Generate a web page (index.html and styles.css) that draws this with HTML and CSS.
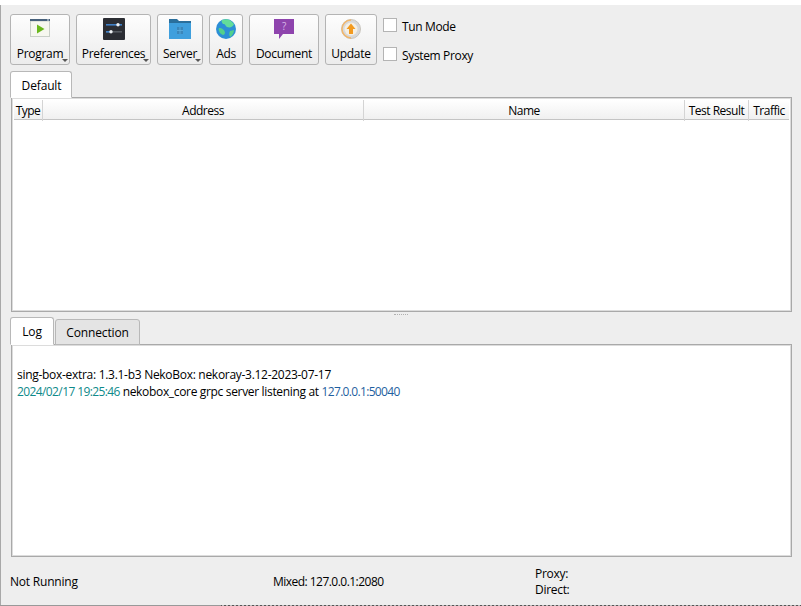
FILE: index.html
```html
<!DOCTYPE html>
<html lang="en">
<head>
<meta charset="utf-8">
<title>NekoBox</title>
<link rel="stylesheet" href="styles.css">
</head>
<body>
<div class="window">
  <div class="toolbar">
    <button class="tool w-program has-menu">
      <svg class="icon" viewBox="0 0 20 20"><rect x="0" y="0" width="20" height="18" fill="#f4f4ee"/><rect x="0.5" y="2" width="19" height="15.5" fill="#f6f7ef" stroke="#c9cfc8"/><rect width="20" height="2" fill="#47617c"/><rect x="17" y="0.5" width="2" height="1" fill="#dfe6ec"/><path d="M7 5.500 L14.500 10 L7 14.500 Z" fill="#6ab81c"/></svg>
      <span>Program</span>
    </button>
    <button class="tool w-pref has-menu">
      <svg class="icon" viewBox="0 0 22 22"><rect width="22" height="22" rx="1" fill="#2b2d33"/><rect x="3" y="6" width="16" height="1.6" fill="#3f7fc4"/><rect x="3" y="13" width="16" height="1.6" fill="#555a60"/><rect x="3" y="13" width="5" height="1.6" fill="#3f7fc4"/><circle cx="15" cy="6.8" r="1.7" fill="#eef1f3"/><circle cx="8" cy="13.8" r="1.7" fill="#eef1f3"/></svg>
      <span>Preferences</span>
    </button>
    <button class="tool w-server has-menu">
      <svg class="icon" viewBox="0 0 22 20"><path d="M0 0 H8 L10 2 H22 V6 H0 Z" fill="#2a6f9c"/><rect y="4" width="22" height="16" fill="#3f9fdd"/><rect x="8" y="8" width="6" height="7" fill="#3a86ba"/><path d="M11 8 V15 M8 11.5 H14" stroke="#5eaee0" stroke-width=".8"/></svg>
      <span>Server</span>
    </button>
    <button class="tool w-ads">
      <svg class="icon" viewBox="0 0 20 20"><circle cx="10" cy="10" r="10" fill="#2c8fd6"/><path d="M6 1 C9 0 13 0 15 2 L18 5 C17 8 14 9 11 8 C9 7 10 5 7 5 C6 4 5 2 6 1 Z" fill="#62dd9a"/><path d="M3 9 C6 9 9 11 9 14 C8 17 6 16 4 14 C3 12 2 10 3 9 Z" fill="#52d08c"/><path d="M14 12 L18 11 C18 14 16 17 14 18 C13 16 13 14 14 12 Z" fill="#52d08c"/></svg>
      <span>Ads</span>
    </button>
    <button class="tool w-doc">
      <svg class="icon" viewBox="0 0 20 20"><path d="M0 0 H20 V15 H9 L5 20 V15 H0 Z" fill="#8e44ad"/><text x="10" y="11" text-anchor="middle" class="qmark">?</text></svg>
      <span>Document</span>
    </button>
    <button class="tool w-update">
      <svg class="icon" viewBox="0 0 20 20"><circle cx="10" cy="10" r="9.5" fill="#d8d8d8" stroke="#c8c4bc"/><path d="M10 1 A9 9 0 0 0 10 19" fill="none" stroke="#f2b66a" stroke-width="1.4"/><circle cx="10" cy="10" r="6.500" fill="#f4efe4"/><path d="M10 4.500 L14.500 10 H12 V15 H8 V10 H5.500 Z" fill="#f39a1e"/></svg>
      <span>Update</span>
    </button>
    <div class="checks">
      <label class="check"><span class="box"></span><span class="check-text">Tun Mode</span></label>
      <label class="check"><span class="box"></span><span class="check-text">System Proxy</span></label>
    </div>
  </div>

  <div class="tabs top-tabs">
    <div class="tab active">Default</div>
  </div>
  <div class="pane list-pane">
    <div class="head">
      <div class="col">Type</div>
      <div class="col">Address</div>
      <div class="col">Name</div>
      <div class="col">Test Result</div>
      <div class="col last">Traffic</div>
    </div>
  </div>

  <div class="splitter"><span class="grip"></span></div>

  <div class="tabs log-tabs">
    <div class="tab active log-tab">Log</div>
    <div class="tab conn-tab">Connection</div>
  </div>
  <div class="pane log-pane">
    <div class="log">
      <div class="line1">sing-box-extra: 1.3.1-b3 NekoBox: nekoray-3.12-2023-07-17</div>
      <div class="line2"><span class="ts">2024/02/17 19:25:46</span> nekobox_core grpc server listening at <span class="addr">127.0.0.1:50040</span></div>
    </div>
  </div>

  <div class="status">
    <div class="st-run">Not Running</div>
    <div class="st-mixed">Mixed: 127.0.0.1:2080</div>
    <div class="st-speed"><div>Proxy:</div><div>Direct:</div></div>
  </div>
</div>
<div class="edge"></div>
</body>
</html>
```
FILE: styles.css
```css
* { box-sizing: border-box; }
html, body { margin: 0; height: 606px; overflow: hidden; background: #fff; }
body {
  padding-top: 5px;
  font: 12px/16px "Open Sans", "Noto Sans", sans-serif;
  color: #000;
}
.window {
  height: 600px;
  background: #eee;
  border-left: 1px solid #a8a8a8;
  padding: 9px 9px 0 9px;
  display: flex;
  flex-direction: column;
}
.edge {
  height: 1px;
  background:
    linear-gradient(90deg, #999 221px, transparent 221px),
    repeating-linear-gradient(90deg, #555 0 2px, #bbb 2px 4px);
}
.toolbar { display: flex; gap: 6px; height: 52px; }
.tool {
  position: relative;
  height: 51px;
  padding: 0;
  border: 1px solid #b4b4b4;
  border-radius: 3px;
  background: linear-gradient(#fdfdfd, #ececec);
  font: inherit;
  letter-spacing: -0.3px;
  display: flex;
  flex-direction: column;
  align-items: center;
  color: #000;
}
.tool .icon { width: 20px; height: 20px; margin-top: 4px; }
.tool span { margin-top: 7px; white-space: nowrap; }
.w-program { width: 60px; }
.w-pref { width: 75px; }
.w-pref .icon { width: 22px; height: 22px; margin-top: 3px; }
.w-pref span { margin-top: 6px; }
.w-server { width: 46px; }
.w-server .icon { width: 22px; }
.w-ads { width: 34px; }
.w-doc { width: 70px; }
.w-update { width: 52px; }
.has-menu::after {
  content: "";
  position: absolute;
  right: 1px;
  bottom: 2px;
  border: 3px solid transparent;
  border-top: 3px solid #555;
  border-bottom: 0;
}
.checks { display: flex; flex-direction: column; gap: 15px; padding-top: 4px; }
.check { display: flex; align-items: center; gap: 5px; height: 14px; letter-spacing: -0.35px; }
.check-text { padding-top: 4px; }
.box { width: 14px; height: 14px; background: #fff; border: 1px solid #b4b4b4; }
.tabs { display: flex; align-items: flex-end; position: relative; z-index: 1; }
.top-tabs { margin-top: 5px; height: 27px; }
.log-tabs { height: 28px; }
.tab {
  height: 26px;
  padding-top: 1px;
  border: 1px solid #b8b8b8;
  border-radius: 3px 3px 0 0;
  background: #e4e4e4;
  display: flex;
  align-items: center;
  justify-content: center;
  letter-spacing: -0.15px;
}
.tab.active { height: 27px; background: #fff; border-bottom-color: #fff; padding-top: 2px; }
.log-tabs .tab.active { height: 28px; }
.top-tabs .tab { width: 62px; padding-left: 1px; }
.log-tab { width: 44px; }
.conn-tab { width: 85px; margin-left: 1px; }
.pane {
  margin-left: 1px;
  width: 781px;
  border: 1px solid #a9a9a9;
  background: #fff;
  box-shadow: inset 0 0 0 1px #dcdcdc;
  margin-top: -1px;
}
.list-pane { height: 215px; padding: 2px; }
.head {
  display: grid;
  grid-template-columns: 29px 321px 321px 64px 40px;
  height: 20px;
  background: linear-gradient(#ffffff, #f0f0f0);
  border-bottom: 1px solid #c4c4c4;
}
.col {
  text-align: center;
  line-height: 21px;
  border-right: 1px solid #d4d4d4;
  white-space: nowrap;
  letter-spacing: -0.5px;
}
.col.last { border-right: 0; }
.splitter { height: 5px; display: flex; justify-content: center; align-items: center; }
.grip { width: 14px; height: 1px; border-top: 1px dotted #b0b0b0; }
.log-pane { height: 213px; }
.log { padding: 21px 5px; line-height: 17px; }
.line1 { letter-spacing: -0.29px; }
.line2 { letter-spacing: -0.33px; white-space: nowrap; }
.ts { color: #0e8a8a; letter-spacing: -0.6px; }
.addr { color: #1f5fa0; letter-spacing: -0.67px; }
.status { display: flex; height: 48px; align-items: center; padding-top: 1px; letter-spacing: -0.2px; }
.st-run { width: 263px; }
.st-mixed { width: 262px; letter-spacing: -0.53px; }
.st-speed { letter-spacing: -0.3px; }
.qmark { font: 10px "Open Sans", sans-serif; fill: #d9b8e8; }
```
